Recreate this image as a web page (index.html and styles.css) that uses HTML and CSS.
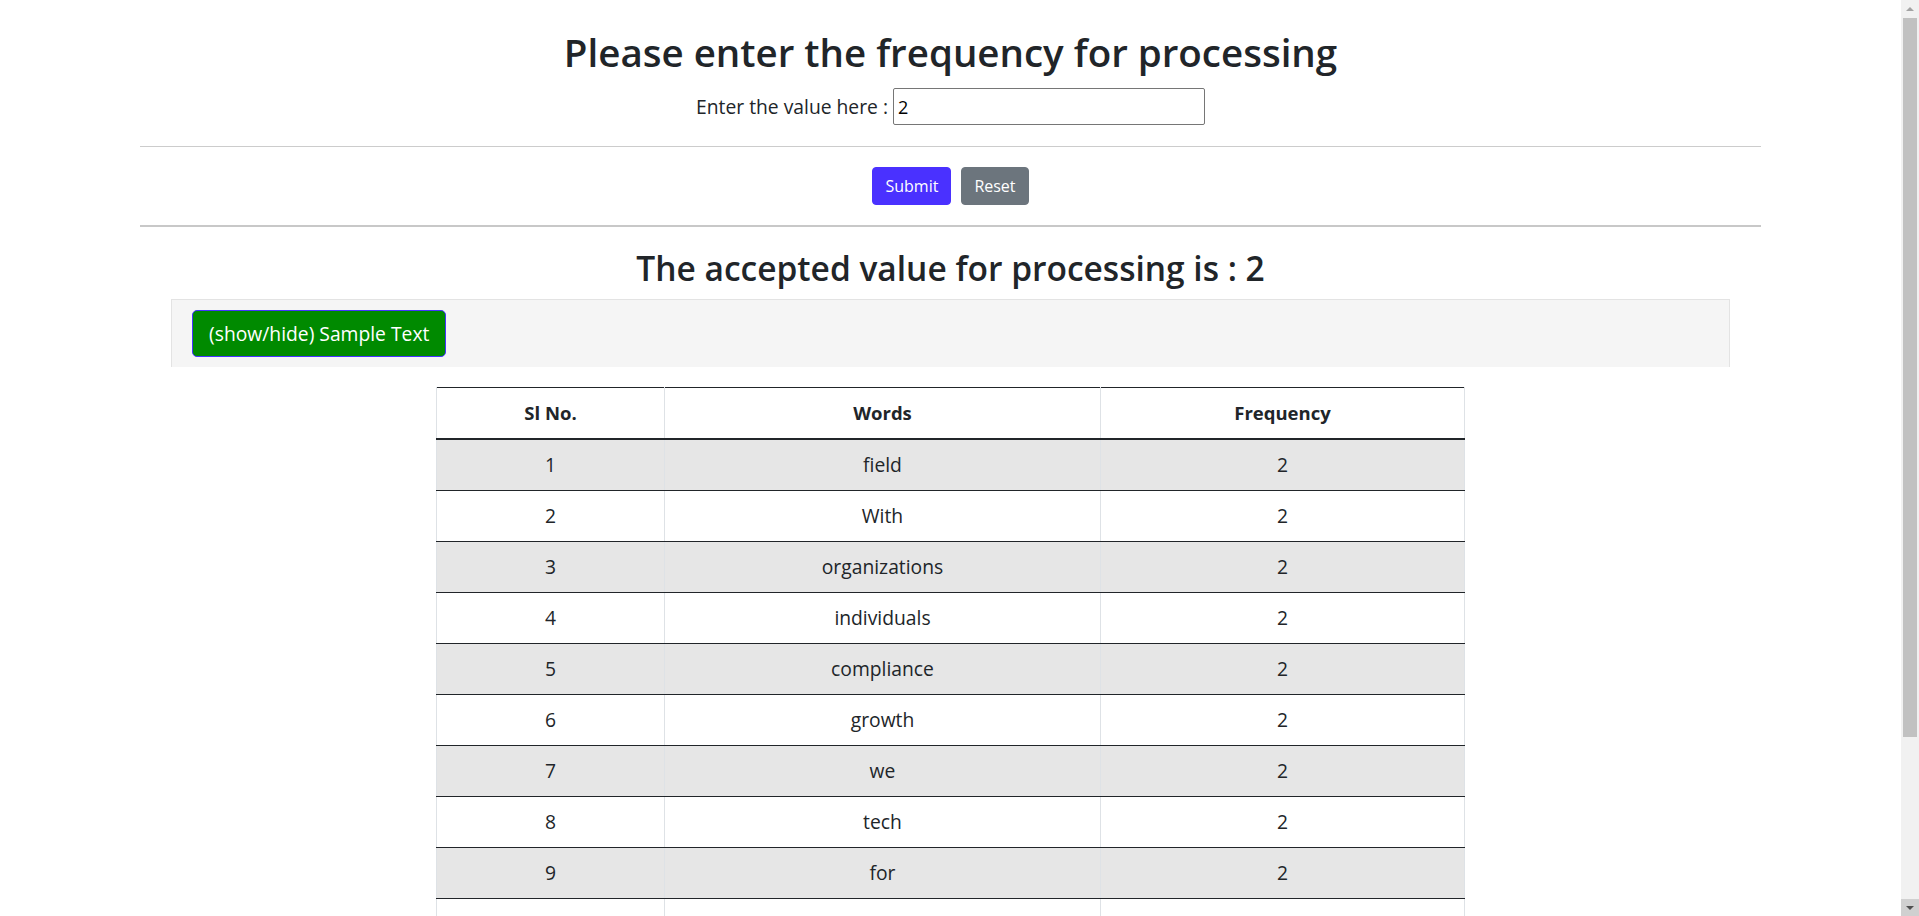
FILE: index.html
```html
<!DOCTYPE html>
<html lang="en">
<head>
<meta charset="utf-8">
<title>Word Frequency</title>
<link rel="stylesheet" href="styles.css">
</head>
<body>
<div class="page">
  <h1 class="title">Please enter the frequency for processing</h1>
  <form class="entry">
    <label class="entry-label" for="freq">Enter the value here :</label>
    <input class="entry-input" id="freq" type="text" value="2">
  </form>
  <hr class="rule rule-thin">
  <div class="actions">
    <button class="btn btn-submit" type="button">Submit</button>
    <button class="btn btn-reset" type="button">Reset</button>
  </div>
  <hr class="rule rule-thick">
  <h2 class="result">The accepted value for processing is : 2</h2>
  <div class="well">
    <button class="btn-toggle" type="button">(show/hide) Sample Text</button>
  </div>
  <table class="freq-table">
    <colgroup>
      <col class="col-num">
      <col class="col-word">
      <col class="col-freq">
    </colgroup>
    <thead>
      <tr><th>Sl No.</th><th>Words</th><th>Frequency</th></tr>
    </thead>
    <tbody>
      <tr><td>1</td><td>field</td><td>2</td></tr>
      <tr><td>2</td><td>With</td><td>2</td></tr>
      <tr><td>3</td><td>organizations</td><td>2</td></tr>
      <tr><td>4</td><td>individuals</td><td>2</td></tr>
      <tr><td>5</td><td>compliance</td><td>2</td></tr>
      <tr><td>6</td><td>growth</td><td>2</td></tr>
      <tr><td>7</td><td>we</td><td>2</td></tr>
      <tr><td>8</td><td>tech</td><td>2</td></tr>
      <tr><td>9</td><td>for</td><td>2</td></tr>
      <tr><td>10</td><td>and</td><td>2</td></tr>
    </tbody>
  </table>
</div>
<div class="scrollbar" aria-hidden="true">
  <div class="sb-btn sb-up">
    <svg width="10" height="6" viewBox="0 0 10 6"><path d="M1 5 L5 1 L9 5 Z" fill="#a3a3a3"/></svg>
  </div>
  <div class="sb-track"><div class="sb-thumb"></div></div>
  <div class="sb-btn sb-down">
    <svg width="10" height="6" viewBox="0 0 10 6"><path d="M1 1 L5 5 L9 1 Z" fill="#505050"/></svg>
  </div>
</div>
</body>
</html>
```

FILE: styles.css
```css
html, body {
  margin: 0;
  padding: 0;
  background: #ffffff;
}

body {
  font-family: "Open Sans", "Lato", sans-serif;
  color: #212529;
  font-size: 19.3px;
  line-height: 1.5;
}

/* emulated browser scrollbar (overlay on the right edge) */
.scrollbar {
  position: fixed;
  top: 0;
  right: 0;
  bottom: 0;
  width: 18px;
  background: #f1f1f1;
  display: flex;
  flex-direction: column;
}

.sb-btn {
  height: 17px;
  flex: 0 0 17px;
  display: flex;
  justify-content: center;
}

.sb-up {
  align-items: flex-start;
  padding-top: 6px;
  box-sizing: border-box;
}

.sb-down {
  background: #d0d0d0;
  align-items: flex-start;
  padding-top: 6px;
  box-sizing: border-box;
}

.sb-track {
  flex: 1 1 auto;
  padding: 1px 2px 0;
}

.sb-thumb {
  height: 719px;
  background: #c1c1c1;
}

.page {
  margin-right: 18px;
  display: flex;
  flex-direction: column;
  align-items: center;
  padding-bottom: 20px;
}

.title {
  margin: 28px 0 0;
  font-size: 38.5px;
  line-height: 48px;
  font-weight: 600;
  text-align: center;
}

.entry {
  margin: 12px 0 0;
  display: flex;
  align-items: center;
  gap: 5px;
}

.entry-label {
  font-size: 19.3px;
  line-height: 30px;
}

.entry-input {
  box-sizing: border-box;
  width: 312px;
  height: 37px;
  border: 1px solid #767676;
  border-radius: 2px;
  padding: 0 4px;
  font-family: "Open Sans", "Lato", sans-serif;
  font-size: 18px;
  color: #000;
  background: #fff;
}

.rule {
  width: 1621px;
  border: 0;
  margin: 0;
  padding: 0;
}

.rule-thin {
  margin-top: 21px;
  border-top: 1px solid #cccccc;
}

.rule-thick {
  margin-top: 20px;
  border-top: 2px solid #c8c8c8;
}

.actions {
  margin-top: 20px;
  display: flex;
  gap: 10px;
}

.btn {
  box-sizing: border-box;
  height: 38px;
  padding: 6px 12px;
  border: 1px solid transparent;
  border-radius: 4px;
  font-family: "Open Sans", "Lato", sans-serif;
  font-size: 16px;
  line-height: 24px;
  color: #fff;
  cursor: pointer;
}

.btn-submit {
  background: #4a31ff;
  border-color: #4a31ff;
}

.btn-reset {
  background: #6c757d;
  border-color: #6c757d;
}

.result {
  margin: 22px 0 0;
  font-size: 33.5px;
  line-height: 38px;
  font-weight: 600;
  text-align: center;
}

.well {
  box-sizing: border-box;
  width: 1559px;
  margin-top: 12px;
  padding: 10px 20px;
  background: #f5f5f5;
  border: 1px solid #e3e3e3;
  border-bottom: 0;
  display: flex;
}

.btn-toggle {
  box-sizing: border-box;
  height: 47px;
  padding: 7px 16px;
  background: #008a00;
  border: 1px solid #4433ff;
  border-radius: 5px;
  font-family: "Open Sans", "Lato", sans-serif;
  font-size: 19.3px;
  line-height: 30px;
  color: #fff;
  cursor: pointer;
}

.freq-table {
  margin-top: 20px;
  width: 1028px;
  table-layout: fixed;
  border-collapse: collapse;
  border-top: 1px solid #212529;
}

.col-num { width: 228px; }
.col-word { width: 436px; }
.col-freq { width: 364px; }

.freq-table th,
.freq-table td {
  padding: 10px;
  height: 30px;
  line-height: 30px;
  font-size: 19.3px;
  text-align: center;
  border-left: 1px solid #dee2e6;
  border-right: 1px solid #dee2e6;
  border-bottom: 1px solid #212529;
}

.freq-table th {
  font-size: 18.5px;
  font-weight: 700;
  border-bottom: 2px solid #212529;
}

.freq-table tbody tr:nth-child(odd) td {
  background: #e6e6e6;
}
```
